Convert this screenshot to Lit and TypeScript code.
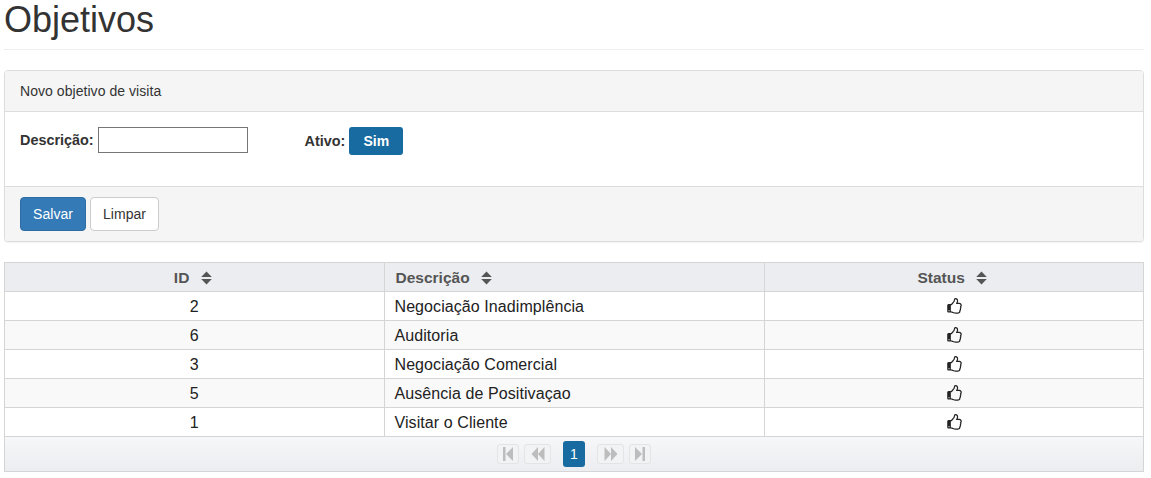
import { LitElement, html, css, svg } from "lit";
import { customElement } from "lit/decorators.js";

const rows = [
  { id: 2, desc: "Negociação Inadimplência" },
  { id: 6, desc: "Auditoria" },
  { id: 3, desc: "Negociação Comercial" },
  { id: 5, desc: "Ausência de Positivaçao" },
  { id: 1, desc: "Visitar o Cliente" },
];

const sortIcon = html`<svg class="sort" width="11" height="14" viewBox="0 0 11 14">
  <path d="M5.5 0.5 L10.8 6 H0.2 Z M0.2 8 H10.8 L5.5 13.5 Z" fill="currentColor"></path>
</svg>`;

// thumbs-o-up
const thumb = html`<svg class="thumb" width="17" height="17" viewBox="0 0 1792 1792">
  <path
    d="M384 1344q0-26-19-45t-45-19-45 19-19 45 19 45 45 19 45-19 19-45zm1152-576q0-51-39-89.5t-89-38.5h-352q0-58 48-159.5t48-160.5q0-98-32-145t-128-47q-26 26-38 85t-30.5 125.5-59.5 109.5q-22 23-77 91-4 5-23 30t-31.5 41-34.5 42.5-40 44-38.5 35.5-40 27-35.5 9h-32v640h32q13 0 31.5 3t33 6.5 38 11 35 11.5 35.5 12.5 29 10.5q211 73 342 73h121q192 0 192-167 0-26-5-56 30-16 47.5-52.5t17.5-73.5-18-69q53-50 53-119 0-25-10-55.5t-25-47.5q32-1 53.5-47t21.5-81zm128-1q0 89-49 163 9 33 9 69 0 77-38 144 3 21 3 43 0 101-60 178 1 139-85 219.5t-227 80.5h-129q-96 0-189.5-22.5t-216.5-65.5q-116-40-138-40h-288q-53 0-90.5-37.5t-37.5-90.5v-640q0-53 37.5-90.5t90.5-37.5h274q36-24 137-155 58-75 107-128 24-25 35.5-85.5t30.5-126.5 62-108q39-37 90-37 84 0 151 32.5t102 101.5 35 186q0 93-48 192h176q104 0 180 76t76 179z"
    fill="#222"
  ></path>
</svg>`;

const pagerIcon = (d: string) => svg`<svg width="14" height="14" viewBox="0 0 14 14"><path d=${d} fill="#bdbdbd"></path></svg>`;

@customElement("app-root")
export class AppRoot extends LitElement {
  static styles = css`
    :host {
      display: block;
      padding: 0 7px 6px 4px;
      font-family: "Liberation Sans", Arial, sans-serif;
      font-size: 14px;
      color: #333;
    }
    .page-header {
      height: 49px;
      border-bottom: 1px solid #eee;
      margin-bottom: 20px;
    }
    h1 {
      margin: 0;
      font-size: 36px;
      line-height: 40px;
      font-weight: 400;
    }
    .panel {
      border: 1px solid #ddd;
      border-radius: 4px;
      box-shadow: 0 1px 1px rgba(0, 0, 0, 0.05);
      margin-bottom: 20px;
      background: #fff;
    }
    .panel-heading {
      height: 40px;
      display: flex;
      align-items: center;
      padding: 0 15px;
      background: #f5f5f5;
      border-bottom: 1px solid #ddd;
      border-radius: 3px 3px 0 0;
      letter-spacing: 0.05px;
    }
    .panel-body {
      height: 74px;
      box-sizing: border-box;
      padding: 15px;
      display: flex;
      align-items: flex-start;
    }
    .field {
      display: flex;
      align-items: center;
      gap: 4px;
      font-weight: 700;
      font-size: 14.4px;
    }
    .field.active {
      margin-left: 57px;
    }
    .field input {
      box-sizing: border-box;
      width: 150px;
      height: 26px;
      border: 1px solid #767676;
      padding: 1px 2px;
      margin: 0;
      background: #fff;
    }
    .toggle {
      width: 54px;
      height: 28px;
      border-radius: 3px;
      background: #186ba0;
      color: #fff;
      display: flex;
      align-items: center;
      justify-content: center;
      font-weight: 700;
      font-size: 14px;
    }
    .panel-footer {
      height: 55px;
      box-sizing: border-box;
      padding: 10px 15px;
      display: flex;
      gap: 4px;
      background: #f5f5f5;
      border-top: 1px solid #ddd;
      border-radius: 0 0 3px 3px;
    }
    .btn {
      box-sizing: border-box;
      height: 34px;
      padding: 0 12px;
      border: 1px solid #ccc;
      border-radius: 4px;
      background: #fff;
      color: #333;
      font: inherit;
      letter-spacing: 0.05px;
    }
    .btn.primary {
      background: #337ab7;
      border-color: #2e6da4;
      color: #fff;
    }
    .grid {
      border: 1px solid #d5d5d5;
    }
    table {
      width: 100%;
      border-collapse: collapse;
      table-layout: fixed;
      font-size: 16px;
      letter-spacing: 0.08px;
      color: #222;
    }
    .c1 {
      width: 379px;
    }
    .c2 {
      width: 380px;
    }
    th {
      height: 28px;
      box-sizing: border-box;
      padding: 2px 3px 0 0;
      background: #ebedf0;
      color: #555;
      font-size: 15.5px;
      font-weight: 700;
      letter-spacing: 0;
      border-left: 1px solid #d5d5d5;
      border-bottom: 1px solid #d5d5d5;
    }
    th:first-child,
    td:first-child {
      border-left: 0;
    }
    th.left {
      text-align: left;
      padding-left: 11px;
    }
    td.left {
      text-align: left;
      padding-left: 10px;
    }
    td {
      height: 29px;
      box-sizing: border-box;
      padding: 2px 0 0;
      text-align: center;
      border-left: 1px solid #d5d5d5;
      border-bottom: 1px solid #d5d5d5;
    }
    td.icon {
      padding: 2px 0 0 1px;
    }
    tr.odd td {
      background: #f9f9f9;
    }
    .sort {
      margin-left: 7px;
      vertical-align: -2px;
    }
    .thumb {
      display: block;
      margin: 0 auto;
    }
    .pager {
      height: 34px;
      display: flex;
      align-items: center;
      justify-content: center;
      gap: 5px;
      background: linear-gradient(#f6f7f9, #ebedf0);
    }
    .pg {
      box-sizing: border-box;
      height: 20px;
      width: 22px;
      border: 1px solid #e4e4e4;
      border-radius: 3px;
      background: #f2f3f5;
      display: flex;
      align-items: center;
      justify-content: center;
    }
    .pg.wide {
      width: 27px;
    }
    .pg.current {
      width: 22px;
      height: 26px;
      border: 0;
      background: #186ba0;
      color: #fff;
      font-size: 14px;
      margin: 0 7px;
    }
  `;

  render() {
    return html`
      <div class="page-header"><h1>Objetivos</h1></div>

      <div class="panel">
        <div class="panel-heading">Novo objetivo de visita</div>
        <div class="panel-body">
          <label class="field">Descrição: <input type="text" /></label>
          <div class="field active">Ativo: <div class="toggle">Sim</div></div>
        </div>
        <div class="panel-footer">
          <button class="btn primary">Salvar</button>
          <button class="btn">Limpar</button>
        </div>
      </div>

      <div class="grid">
        <table>
          <colgroup><col class="c1" /><col class="c2" /><col /></colgroup>
          <thead>
            <tr>
              <th>ID ${sortIcon}</th>
              <th class="left">Descrição ${sortIcon}</th>
              <th>Status ${sortIcon}</th>
            </tr>
          </thead>
          <tbody>
            ${rows.map(
              (r, i) => html`<tr class=${i % 2 ? "odd" : ""}>
                <td>${r.id}</td>
                <td class="left">${r.desc}</td>
                <td class="icon">${thumb}</td>
              </tr>`
            )}
          </tbody>
        </table>
        <div class="pager">
          <span class="pg">${pagerIcon("M2 0 H4.5 V14 H2 Z M12 0 V14 L5 7 Z")}</span>
          <span class="pg wide">${pagerIcon("M7 0 V14 L0.5 7 Z M13.5 0 V14 L7 7 Z")}</span>
          <span class="pg current">1</span>
          <span class="pg wide">${pagerIcon("M7 0 V14 L13.5 7 Z M0.5 0 V14 L7 7 Z")}</span>
          <span class="pg">${pagerIcon("M2 0 V14 L9 7 Z M9.5 0 H12 V14 H9.5 Z")}</span>
        </div>
      </div>
    `;
  }
}
